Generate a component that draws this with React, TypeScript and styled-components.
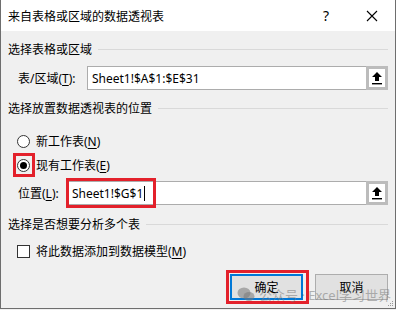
import React from "react";
import styled, { createGlobalStyle } from "styled-components";

const Global = createGlobalStyle`
  html, body { margin: 0; padding: 0; background: #f0f0f0; }
  body {
    font-family: "Noto Sans", "Noto Sans CJK SC", sans-serif;
    font-size: 12px;
    color: #000;
  }
`;

const Window = styled.div`
  position: relative;
  width: 396px;
  height: 309px;
  box-sizing: border-box;
  border: 1px solid #6e6e6e;
  border-top: none;
  background: #f0f0f0;
  display: flex;
  flex-direction: column;
  overflow: hidden;
`;

const TitleBar = styled.div`
  height: 31px;
  background: #fff;
  display: flex;
  align-items: center;
  padding-left: 7px;
  font-size: 12px;
`;

const Title = styled.div`
  flex: 1;
`;

const TitleButton = styled.div`
  width: 46px;
  height: 31px;
  display: flex;
  align-items: center;
  justify-content: center;
  font-size: 14px;
`;

const Body = styled.div`
  padding: 0 7px 0 7px;
  display: flex;
  flex-direction: column;
`;

const GroupHeader = styled.div<{ $top: number }>`
  margin-top: ${(p) => p.$top}px;
  height: 18px;
  display: flex;
  align-items: center;
  gap: 6px;
  &::after {
    content: "";
    flex: 1;
    height: 1px;
    background: #d9d9d9;
  }
`;

const FieldRow = styled.div<{ $top: number }>`
  position: relative;
  margin-top: ${(p) => p.$top}px;
  display: flex;
  align-items: center;
  padding-left: 10px;
`;

const Label = styled.div<{ $width: number }>`
  width: ${(p) => p.$width}px;
  flex: none;
`;

const Field = styled.div`
  flex: 1;
  height: 24px;
  box-sizing: border-box;
  border: 1px solid #acacac;
  background: #fff;
  display: flex;
  align-items: center;
`;

const FieldText = styled.div`
  flex: 1;
  padding-left: 4px;
  display: flex;
  align-items: center;
`;

const Caret = styled.span`
  display: inline-block;
  width: 1px;
  height: 15px;
  background: #000;
  margin-left: 1px;
`;

const PickButton = styled.div`
  width: 22px;
  height: 24px;
  margin: -1px -1px -1px 0;
  box-sizing: border-box;
  border: 3px solid #bcbcbc;
  background: #fff;
  display: flex;
  align-items: center;
  justify-content: center;
`;

const HighlightBox = styled.div<{ $l: number; $t: number; $w: number; $h: number }>`
  position: absolute;
  left: ${(p) => p.$l}px;
  top: ${(p) => p.$t}px;
  width: ${(p) => p.$w}px;
  height: ${(p) => p.$h}px;
  box-sizing: border-box;
  border: 3px solid #e3212b;
  pointer-events: none;
`;

const OptionRow = styled.div<{ $top: number }>`
  position: relative;
  margin-top: ${(p) => p.$top}px;
  height: 20px;
  display: flex;
  align-items: center;
  padding-left: 9px;
  gap: 6px;
`;

const Radio = styled.span<{ $checked?: boolean }>`
  width: 13px;
  height: 13px;
  box-sizing: border-box;
  border: 1px solid #333;
  border-radius: 50%;
  background: #fff;
  display: flex;
  align-items: center;
  justify-content: center;
  &::after {
    content: "";
    width: 7px;
    height: 7px;
    border-radius: 50%;
    background: ${(p) => (p.$checked ? "#000" : "transparent")};
  }
`;

const Check = styled.span`
  width: 13px;
  height: 13px;
  box-sizing: border-box;
  border: 1px solid #333;
  background: #fff;
`;

const Key = styled.span`
  text-decoration: underline;
  text-underline-offset: 2px;
`;

const ButtonRow = styled.div`
  margin-top: 13px;
  display: flex;
  justify-content: flex-end;
  gap: 12px;
  position: relative;
`;

const Button = styled.div<{ $default?: boolean }>`
  width: 73px;
  height: 26px;
  box-sizing: border-box;
  border: ${(p) => (p.$default ? "2px solid #0078d7" : "1px solid #adadad")};
  background: #e1e1e1;
  display: flex;
  align-items: center;
  justify-content: center;
`;

const Watermark = styled.div`
  position: absolute;
  left: 236px;
  top: 285px;
  display: flex;
  align-items: center;
  gap: 4px;
  color: rgba(120, 120, 120, 0.55);
  font-size: 13px;
  pointer-events: none;
`;

const Grip = styled.svg`
  position: absolute;
  right: 1px;
  bottom: 1px;
`;

const UpArrow = () => (
  <svg width="12" height="14" viewBox="0 0 12 14">
    <polygon points="6,1 11,6 8,6 8,10 4,10 4,6 1,6" fill="#000" />
    <rect x="1" y="12" width="10" height="1.4" fill="#000" />
  </svg>
);

export default function App() {
  return (
    <>
      <Global />
      <Window>
        <TitleBar>
          <Title>来自表格或区域的数据透视表</Title>
          <TitleButton>?</TitleButton>
          <TitleButton>
            <svg width="12" height="12" viewBox="0 0 12 12">
              <path d="M1 1 L11 11 M11 1 L1 11" stroke="#000" strokeWidth="1.1" />
            </svg>
          </TitleButton>
        </TitleBar>
        <Body>
          <GroupHeader $top={9}>选择表格或区域</GroupHeader>
          <FieldRow $top={8}>
            <Label $width={69}>
              表/区域(<Key>T</Key>):
            </Label>
            <Field>
              <FieldText>Sheet1!$A$1:$E$31</FieldText>
              <PickButton>
                <UpArrow />
              </PickButton>
            </Field>
          </FieldRow>

          <GroupHeader $top={9}>选择放置数据透视表的位置</GroupHeader>
          <OptionRow $top={14}>
            <Radio />
            <span>
              新工作表(<Key>N</Key>)
            </span>
          </OptionRow>
          <OptionRow $top={4}>
            <Radio $checked />
            <span>
              现有工作表(<Key>E</Key>)
            </span>
            <HighlightBox $l={5} $t={-2} $w={22} $h={24} />
          </OptionRow>
          <FieldRow $top={6}>
            <Label $width={49}>
              位置(<Key>L</Key>):
            </Label>
            <Field>
              <FieldText>
                Sheet1!$G$1
                <Caret />
              </FieldText>
              <PickButton>
                <UpArrow />
              </PickButton>
            </Field>
            <HighlightBox $l={58} $t={-3} $w={90} $h={30} />
          </FieldRow>

          <GroupHeader $top={10}>选择是否想要分析多个表</GroupHeader>
          <OptionRow $top={8}>
            <Check />
            <span>
              将此数据添加到数据模型(<Key>M</Key>)
            </span>
          </OptionRow>

          <ButtonRow>
            <Button $default>确定</Button>
            <Button>取消</Button>
            <HighlightBox $l={218} $t={-4} $w={83} $h={34} />
          </ButtonRow>
        </Body>
        <Watermark>
          <svg width="18" height="15" viewBox="0 0 18 15">
            <ellipse cx="7" cy="6" rx="6.5" ry="5.5" fill="rgba(120,120,120,0.55)" />
            <ellipse cx="12" cy="9.5" rx="5.5" ry="4.5" fill="rgba(120,120,120,0.55)" />
          </svg>
          <span>公众号 · Excel学习世界</span>
        </Watermark>
        <Grip width="7" height="7" viewBox="0 0 7 7">
          <rect x="5" y="1" width="1" height="1" fill="#999" />
          <rect x="3" y="3" width="1" height="1" fill="#999" />
          <rect x="5" y="3" width="1" height="1" fill="#999" />
          <rect x="1" y="5" width="1" height="1" fill="#999" />
          <rect x="3" y="5" width="1" height="1" fill="#999" />
          <rect x="5" y="5" width="1" height="1" fill="#999" />
        </Grip>
      </Window>
    </>
  );
}
